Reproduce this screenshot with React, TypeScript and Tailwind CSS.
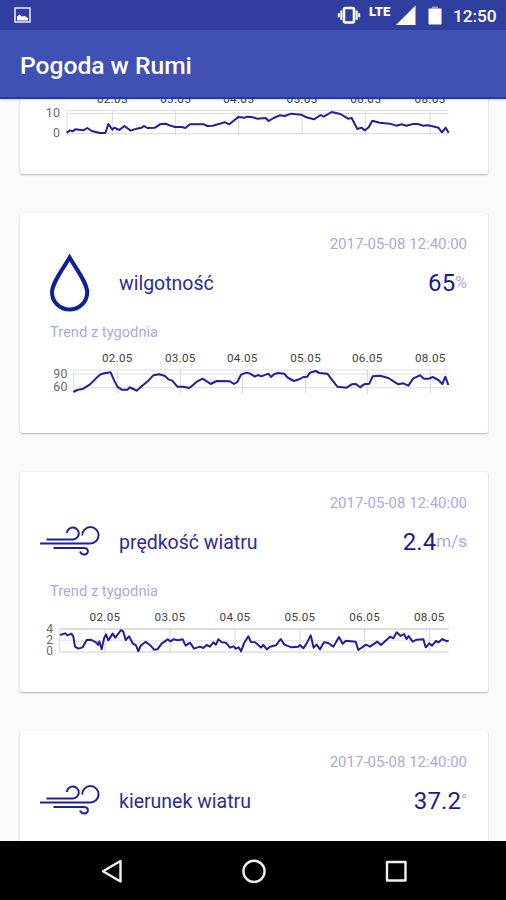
type Point = [number, number];

// Chart geometry is kept in thirds of a pixel.
const shift = (points: Point[], dx: number, dy: number): Point[] =>
  points.map(([x, y]) => [x + dx, y + dy]);

type ChartData = {
  days: number[];
  dayBaseline: number;
  scaleSize: number;
  scale: { text: string; x: number; y: number }[];
  left: number;
  rows: { y: number; color: string }[];
  top: number;
  bottom: number;
  points: Point[];
};

const DAY_NAMES = ["02.05", "03.05", "04.05", "05.05", "06.05", "08.05"];

const temperature: ChartData = {
  days: [337, 527, 716, 906, 1097, 1290],
  dayBaseline: 65,
  scaleSize: 37,
  scale: [
    { text: "10", x: 181, y: 108 },
    { text: "0", x: 181, y: 169 },
  ],
  left: 201,
  rows: [
    { y: 88, color: "#dcdcdc" },
    { y: 98, color: "#dcdcdc" },
    { y: 158, color: "#d8d8d8" },
  ],
  top: 88,
  bottom: 163,
  points: [
    ...shift([[200,128],[210,121],[218,124],[226,118],[250,121],[262,114],[275,123],[300,129],[316,129],[325,102],[337,119],[343,113],[358,120],[373,108],[392,122],[410,116],[425,113],[432,108],[442,114],[465,113],[480,103],[497,101],[508,106],[525,111],[545,111],[556,114],[570,103],[612,103],[622,108],[638,107],[675,97],[688,103],[715,81],[735,83],[742,80]], 0, 27),
    ...shift([[0,82],[12,86],[38,84],[47,93],[62,84],[80,76],[95,78],[115,71],[145,74],[160,82],[183,88],[203,75],[212,80],[236,66],[262,72],[285,86],[296,84],[313,117],[325,113],[336,121],[347,112],[358,92],[380,98],[410,101],[430,107],[446,103],[460,107],[480,102],[495,102],[510,107],[525,106],[545,110],[556,113],[567,127],[578,113],[587,128]], 759, 27),
  ],
};

const humidity: ChartData = {
  days: [352, 541, 727, 917, 1102, 1291],
  dayBaseline: 66,
  scaleSize: 37,
  scale: [
    { text: "90", x: 203, y: 114 },
    { text: "60", x: 203, y: 152 },
  ],
  left: 221,
  rows: [
    { y: 90, color: "#dcdcdc" },
    { y: 102, color: "#dcdcdc" },
    { y: 143, color: "#dcdcdc" },
  ],
  top: 90,
  bottom: 161,
  points: [
    ...shift([[100,156],[112,150],[130,146],[150,133],[168,115],[182,103],[197,99],[212,97],[220,116],[232,140],[245,149],[262,149],[270,142],[280,147],[290,152],[305,139],[325,122],[340,106],[358,103],[375,108],[385,118],[397,122],[412,140],[430,140],[448,144],[460,134],[472,124],[488,116],[512,132],[530,123],[570,124],[582,132],[592,126],[603,104],[620,98]], 120, 0),
    ...shift([[0,446],[15,455],[24,450],[34,454],[55,446],[63,456],[73,447],[85,444],[103,446],[112,457],[132,468],[150,462],[160,456],[172,455],[180,443],[197,438],[208,444],[232,446],[245,463],[262,485],[290,488],[305,478],[318,477],[330,487],[342,478],[358,476],[368,454],[390,452],[415,459],[445,478],[460,475],[475,482],[490,460],[510,451],[522,461],[537,461],[548,456],[565,465],[577,477],[586,455],[595,480]], 750, -345),
  ],
};

const windSpeed: ChartData = {
  days: [315, 510, 705, 900, 1094, 1288],
  dayBaseline: 66,
  scaleSize: 36,
  scale: [
    { text: "4", x: 160, y: 102 },
    { text: "2", x: 160, y: 136 },
    { text: "0", x: 160, y: 169 },
  ],
  left: 178,
  rows: [
    { y: 90, color: "#bcbcbc" },
    { y: 125, color: "#e4e4e4" },
    { y: 159, color: "#cfcfcf" },
  ],
  top: 90,
  bottom: 164,
  points: [
    ...shift([[90,105],[105,100],[112,106],[125,101],[130,110],[135,140],[145,146],[158,142],[170,120],[182,119],[198,127],[204,135],[208,124],[215,148],[222,115],[228,103],[235,121],[248,101],[256,113],[273,90],[280,95],[287,120],[297,109],[308,130],[318,136],[325,154],[332,137],[347,125],[362,137],[372,149],[382,148],[395,131],[413,118],[422,124],[430,118],[445,121],[458,118],[467,137],[480,128],[492,146],[510,140],[520,144],[530,135],[540,140],[550,127],[558,134],[565,118],[575,127],[588,128],[600,143],[610,139],[618,146],[626,142],[633,154],[642,130],[655,109],[663,126]], 90, 3),
    ...shift([[15,127],[25,135],[33,143],[40,135],[51,148],[60,140],[78,136],[92,117],[103,134],[125,142],[145,140],[150,135],[160,145],[170,130],[182,106],[191,143],[200,134],[210,148],[222,127],[235,129],[250,140],[267,111],[278,131],[288,122],[317,125],[325,150],[348,134],[360,140],[382,125],[393,135],[420,110],[430,115],[440,97],[452,108],[462,102],[470,117],[476,108],[488,125],[500,119],[520,118],[527,142],[538,130],[546,137],[558,123],[566,127],[577,117],[590,124],[596,121]], 750, 3),
  ],
};

function Chart({ data }: { data: ChartData }) {
  return (
    <svg width="468" height="60" viewBox="60 0 1404 180" className="block shrink-0">
      <g strokeWidth="3">
        {data.rows.map((r) => (
          <line key={r.y} x1={data.left} x2={1346} y1={r.y} y2={r.y} stroke={r.color} />
        ))}
        {data.days.map((x) => (
          <line key={x} x1={x} x2={x} y1={data.top} y2={data.bottom} stroke="#d6d6d6" />
        ))}
        <line x1={data.left} x2={data.left} y1={data.top} y2={data.bottom - 4} stroke="#dcdcdc" />
      </g>
      <g fontSize="35" fill="#444" textAnchor="middle" letterSpacing="0.9">
        {data.days.map((x, i) => (
          <text key={x} x={x} y={data.dayBaseline}>
            {DAY_NAMES[i]}
          </text>
        ))}
      </g>
      <g fontSize={data.scaleSize} fill="#6a6a6a" textAnchor="end" letterSpacing="0.9">
        {data.scale.map((s) => (
          <text key={s.text} x={s.x} y={s.y}>
            {s.text}
          </text>
        ))}
      </g>
      <polyline
        points={data.points.map((p) => p.join(",")).join(" ")}
        fill="none"
        stroke="#20209a"
        strokeWidth="6"
        strokeLinejoin="round"
      />
    </svg>
  );
}

function DropIcon() {
  return (
    <svg width="60" height="60" viewBox="0 0 60 60" fill="none" stroke="#10209a" strokeWidth="4">
      <path d="M29.6 4.5 C24 14.5 12 29.5 12 39.5 A17.6 17 0 0 0 47.2 39.5 C47.2 29.5 35.2 14.5 29.6 4.5 Z" />
    </svg>
  );
}

function WindIcon() {
  return (
    <svg width="60" height="60" viewBox="0 0 60 60" fill="none" stroke="#20209a" strokeWidth="2">
      <path d="M6.5 27.5 H33 A6 6 0 1 0 26.8 21" />
      <path d="M0 31.5 H50 A8.2 8.2 0 1 0 42.2 23.5" />
      <path d="M13.5 36 H43.5 C49.5 36 49 42.5 44.3 42.5 C41.5 42.5 40.5 41 40 39.5" />
    </svg>
  );
}

type CardProps = {
  icon: "drop" | "wind";
  name: string;
  value: string;
  unit: string;
  unitClass: string;
  chart?: ChartData;
};

const cardClass =
  "flex h-[220px] shrink-0 flex-col rounded-[2px] bg-white shadow-[0_1px_2px_rgba(0,0,0,0.28),0_0_1px_rgba(0,0,0,0.12)]";

function SensorCard({ icon, name, value, unit, unitClass, chart }: CardProps) {
  return (
    <section className={cardClass}>
      <div className="mt-[20px] h-[20px] pr-[21px] text-right text-[15px] leading-[22px] text-[#aaaade]">
        2017-05-08 12:40:00
      </div>
      <div className="flex h-[60px] items-center pl-[20px] pr-[21px]">
        {icon === "drop" ? <DropIcon /> : <WindIcon />}
        <span className="ml-[19px] pt-[2px] text-[19.5px] text-[#2c2c9c]">{name}</span>
        <span className="ml-auto flex items-center text-[#1c1c92]">
          <span className="text-[24px] tracking-[0.1px]">{value}</span>
          <span className={unitClass}>{unit}</span>
        </span>
      </div>
      <div className="h-[27px] pl-[30px] pt-[9px] text-[14.7px] leading-[20px] text-[#aaaade]">
        Trend z tygodnia
      </div>
      {chart && <Chart data={chart} />}
    </section>
  );
}

function StatusBar() {
  return (
    <div className="flex h-[30px] items-center bg-[#303f9f] text-white">
      <svg width="18" height="18" viewBox="0 0 18 18" className="ml-[14px]" fill="none">
        <rect x="1" y="2" width="15" height="14" stroke="#dfe3ff" strokeWidth="1.6" />
        <path d="M3 14.5 V10.5 L5.5 8.5 L8 10.5 L10.5 10 L14 12 V14.5 Z" fill="#fff" />
      </svg>
      <svg width="24" height="20" viewBox="0 0 24 20" className="ml-auto" fill="#fff">
        <rect x="7" y="3" width="10" height="14.5" rx="1.5" fill="none" stroke="#fff" strokeWidth="2.6" />
        <path d="M3.3 5.5 h2 v9.5 h-2z M18.7 5.5 h2 v9.5 h-2z M0.8 8.3 h2 v4 h-2z M21.2 8.3 h2 v4 h-2z" />
      </svg>
      <span className="-mt-[7px] ml-[8px] w-[23px] text-[13px] font-black leading-[12px]">LTE</span>
      <svg width="20" height="20" viewBox="0 0 20 20" className="ml-[4px]">
        <path d="M0 20 L19.5 0.5 V20 Z" fill="#fff" />
      </svg>
      <svg width="14" height="20" viewBox="0 0 14 20" className="ml-[12px]" fill="#fff">
        <rect x="0.5" y="3.5" width="13" height="16" rx="0.8" />
        <rect x="4" y="1.5" width="6" height="2" opacity="0.5" />
      </svg>
      <span className="ml-[11px] w-[53px] pt-[1px] text-[17.2px] font-medium leading-[20px]">12:50</span>
    </div>
  );
}

export default function App() {
  return (
    <div className="flex h-[900px] w-[506px] flex-col overflow-hidden bg-[#fafafa] font-['Roboto',sans-serif]">
      <StatusBar />
      <header className="z-10 flex h-[69px] shrink-0 items-center border-b-2 border-[#1c3aa8] bg-[#3f51b5] pl-[20px] pt-[6px] shadow-[0_1px_2px_rgba(0,0,0,0.18)]">
        <h1 className="text-[24.6px] font-medium text-white">Pogoda w Rumi</h1>
      </header>
      <main className="h-[742px] shrink-0 overflow-hidden">
        <div className="-mt-[145px] flex flex-col gap-[39px] pl-[20px] pr-[18px]">
          <section className={cardClass}>
            <div className="h-[127px] shrink-0" />
            <Chart data={temperature} />
          </section>
          <SensorCard icon="drop" name="wilgotność" value="65" unit="%" unitClass="text-[16px] text-[#aaaade]" chart={humidity} />
          <SensorCard icon="wind" name="prędkość wiatru" value="2.4" unit="m/s" unitClass="text-[17px] text-[#aaaade]" chart={windSpeed} />
          <SensorCard icon="wind" name="kierunek wiatru" value="37.2" unit="°" unitClass="text-[16px] text-[#aaaade]" />
        </div>
      </main>
      <nav className="flex h-[59px] shrink-0 bg-black">
        <svg width="506" height="59" viewBox="0 0 506 59" fill="none" stroke="#f0f0f0" strokeWidth="2.4" strokeLinejoin="round">
          <path d="M120.5 20 V40.5 L103 30.3 Z" />
          <circle cx="254" cy="30.3" r="10.6" />
          <rect x="387" y="21" width="18.5" height="18.5" />
        </svg>
      </nav>
    </div>
  );
}
